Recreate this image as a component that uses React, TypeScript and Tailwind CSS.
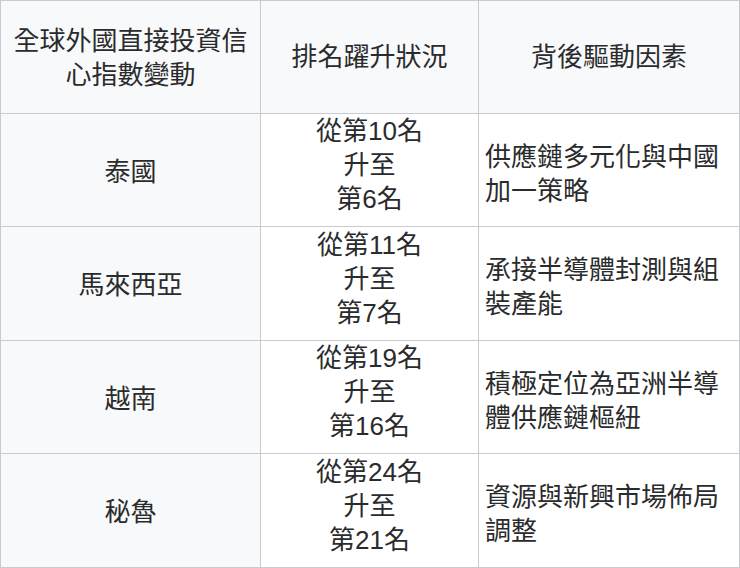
import React from 'react';

type Row = { country: string; rank: [string, string, string]; reason: [string, string] };

const rows: Row[] = [
  { country: '泰國', rank: ['從第10名', '升至', '第6名'], reason: ['供應鏈多元化與中國', '加一策略'] },
  { country: '馬來西亞', rank: ['從第11名', '升至', '第7名'], reason: ['承接半導體封測與組', '裝產能'] },
  { country: '越南', rank: ['從第19名', '升至', '第16名'], reason: ['積極定位為亞洲半導', '體供應鏈樞紐'] },
  { country: '秘魯', rank: ['從第24名', '升至', '第21名'], reason: ['資源與新興市場佈局', '調整'] },
];

const cell = 'border border-[#c8ccd1] align-middle';

export default function App() {
  return (
    <div
      className="w-[740px] h-[568px] bg-white text-[#2a2b2c] text-[26px] leading-[34px] overflow-hidden"
      style={{ fontFamily: '"Liberation Sans", "Noto Sans CJK TC", sans-serif' }}
    >
      <table className="w-[739px] table-fixed border-collapse">
        <colgroup>
          <col className="w-[260px]" />
          <col className="w-[218px]" />
          <col className="w-[261px]" />
        </colgroup>
        <thead>
          <tr className="h-[113px] bg-[#f8f9fa]">
            <th className={`${cell} font-normal text-center px-2 pt-[2px]`}>
              全球外國直接投資信<br />心指數變動
            </th>
            <th className={`${cell} font-normal text-center px-2`}>排名躍升狀況</th>
            <th className={`${cell} font-normal text-center px-2`}>背後驅動因素</th>
          </tr>
        </thead>
        <tbody>
          {rows.map((r, i) => (
            <tr key={r.country} className={i % 2 === 0 ? 'h-[113px]' : 'h-[114px]'}>
              <td className={`${cell} bg-[#f8f9fa] text-center px-2 pt-[3px]`}>{r.country}</td>
              <td className={`${cell} bg-white text-center px-2 pt-0 pb-[10px]`}>
                {r.rank[0]}
                <br />
                {r.rank[1]}
                <br />
                {r.rank[2]}
              </td>
              <td className={`${cell} bg-white text-left pl-[6px] pr-1 pt-[7px]`}>
                {r.reason[0]}
                <br />
                {r.reason[1]}
              </td>
            </tr>
          ))}
        </tbody>
      </table>
    </div>
  );
}
